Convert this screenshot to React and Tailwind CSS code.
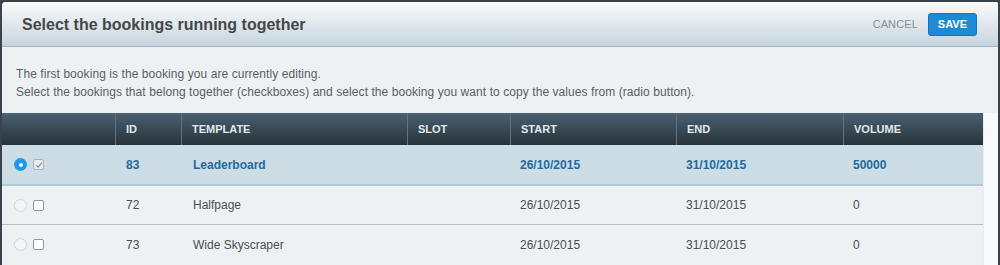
import React from 'react';

const columns = [
  { key: 'sel', label: '', width: 'w-[113px]' },
  { key: 'id', label: 'ID', width: 'w-[66px]' },
  { key: 'template', label: 'TEMPLATE', width: 'w-[226px]' },
  { key: 'slot', label: 'SLOT', width: 'w-[103px]' },
  { key: 'start', label: 'START', width: 'w-[166px]' },
  { key: 'end', label: 'END', width: 'w-[167px]' },
  { key: 'volume', label: 'VOLUME', width: 'flex-1' },
];

const bookings = [
  { id: 83, template: 'Leaderboard', slot: '', start: '26/10/2015', end: '31/10/2015', volume: '50000', current: true },
  { id: 72, template: 'Halfpage', slot: '', start: '26/10/2015', end: '31/10/2015', volume: '0' },
  { id: 73, template: 'Wide Skyscraper', slot: '', start: '26/10/2015', end: '31/10/2015', volume: '0' },
];

function Radio({ on }) {
  return on ? (
    <span className="w-[13px] h-[13px] rounded-full bg-[#1b9bf0] flex items-center justify-center">
      <span className="w-[4px] h-[4px] rounded-full bg-white" />
    </span>
  ) : (
    <span className="w-[13px] h-[13px] rounded-full border border-[#cfd6db] bg-[#f2f5f7]" />
  );
}

function Check({ on }) {
  return on ? (
    <span className="w-[11px] h-[11px] rounded-[2px] border border-[#a9b5bc] bg-[#e6edf1] flex items-center justify-center">
      <svg width="8" height="8" viewBox="0 0 8 8" fill="none">
        <path d="M1.2 4.2 L3.1 6.1 L6.9 1.6" stroke="#8b969d" strokeWidth="1.2" />
      </svg>
    </span>
  ) : (
    <span className="w-[11px] h-[11px] rounded-[2px] border border-[#8f969b] bg-white" />
  );
}

export default function App() {
  return (
    <div className="w-[1000px] h-[265px] overflow-hidden bg-[#3a434b] pt-[2px] px-[2px] font-['Liberation_Sans',Arial,sans-serif]">
      <div className="h-full bg-[#edf1f4] rounded-tl-[4px] rounded-tr-[2px] overflow-hidden flex flex-col">
        {/* Header */}
        <div className="h-[45px] shrink-0 flex items-center justify-between pl-[20px] pr-[21px] bg-gradient-to-b from-[#fafbfc] to-[#c7d4dd] border-b border-[#9db8cb]">
          <h1 className="text-[16px] font-bold text-[#454748] pt-[2px]">Select the bookings running together</h1>
          <div className="flex items-center gap-[10px]">
            <button className="text-[11px] text-[#8a9197] tracking-[0.1px]">CANCEL</button>
            <button className="h-[23px] px-[9px] rounded-[3px] bg-[#1a8cd6] border border-[#1276b8] text-white text-[11px] font-bold">SAVE</button>
          </div>
        </div>

        {/* Info */}
        <div className="pt-[18px] pl-[14px] text-[12px] leading-[18px] tracking-[0.07px] text-[#5a5f63]">
          <p>The first booking is the booking you are currently editing.</p>
          <p>Select the bookings that belong together (checkboxes) and select the booking you want to copy the values from (radio button).</p>
        </div>

        {/* Table */}
        <div className="mt-[12px] flex flex-1 min-h-0">
          <div className="w-[981px] flex flex-col">
            <div className="h-[32px] shrink-0 flex bg-gradient-to-b from-[#4b6172] to-[#27333b] text-[11px] font-bold text-[#e1e8ec]">
              {columns.map((c, i) => (
                <div
                  key={c.key}
                  className={`${c.width} flex items-center pl-[10px] ${i > 0 ? 'border-l border-[#5e7281]' : ''}`}
                >
                  {c.label}
                </div>
              ))}
            </div>
            {bookings.map((b, i) => (
              <div
                key={b.id}
                className={
                  b.current
                    ? 'h-[41px] shrink-0 flex items-center bg-[#ccdde6] border-b-2 border-[#b0c8d8] text-[12px] font-bold text-[#1f6a9d]'
                    : `h-[39px] shrink-0 flex items-center text-[12px] text-[#4a4e52] ${i < bookings.length - 1 ? 'border-b border-[#b9bdc0]' : ''}`
                }
              >
                <div className="w-[113px] flex items-center gap-[6px] pl-[12px]">
                  <Radio on={b.current} />
                  <Check on={b.current} />
                </div>
                <div className="w-[66px] pl-[11px]">{b.id}</div>
                <div className="w-[226px] pl-[12px]">{b.template}</div>
                <div className="w-[103px] pl-[11px]">{b.slot}</div>
                <div className="w-[166px] pl-[10px]">{b.start}</div>
                <div className="w-[167px] pl-[10px]">{b.end}</div>
                <div className="flex-1 pl-[10px]">{b.volume}</div>
              </div>
            ))}
          </div>
          <div className="flex-1 bg-[#f8f9fa] border-l border-[#e9ecee]" />
        </div>
      </div>
    </div>
  );
}
